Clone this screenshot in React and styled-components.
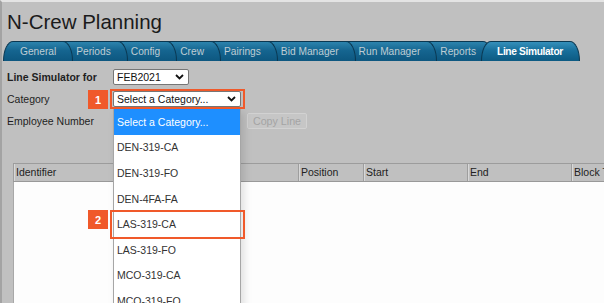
import React from "react";
import styled, { createGlobalStyle } from "styled-components";

const GlobalStyle = createGlobalStyle`
  html, body {
    margin: 0;
    padding: 0;
    height: 100%;
    overflow: hidden;
    background: #c0c0c0;
  }
  body {
    font-family: "Liberation Sans", Arial, sans-serif;
  }
  #root {
    height: 100%;
  }
`;

const TABS = [
  "General",
  "Periods",
  "Config",
  "Crew",
  "Pairings",
  "Bid Manager",
  "Run Manager",
  "Reports",
  "Line Simulator",
];

const CATEGORIES = [
  "Select a Category...",
  "DEN-319-CA",
  "DEN-319-FO",
  "DEN-4FA-FA",
  "LAS-319-CA",
  "LAS-319-FO",
  "MCO-319-CA",
  "MCO-319-FO",
];

const COLUMNS = [
  { label: "Identifier", width: 285 },
  { label: "Position", width: 65 },
  { label: "Start", width: 104 },
  { label: "End", width: 104 },
  { label: "Block Time", width: 120 },
];

const Chevron = () => (
  <svg width="9" height="6" viewBox="0 0 9 6">
    <path d="M1 1l3.5 3.5L8 1" fill="none" stroke="#111" strokeWidth="1.8" />
  </svg>
);

export default function App() {
  return (
    <Page>
      <GlobalStyle />
      <Title>N-Crew Planning</Title>
      <TabBar>
        {TABS.map((t, i) => (
          <Tab
            key={t}
            $first={i === 0}
            $active={t === "Line Simulator"}
            $z={TABS.length - i}
          >
            {t}
          </Tab>
        ))}
      </TabBar>

      <Form>
        <Label $bold>Line Simulator for</Label>
        <SelectBox $width={76}>
          FEB2021
          <Chevron />
        </SelectBox>

        <Label>Category</Label>
        <Marked $inset="-2px -4px -2px -3px">
          <Badge $left={-25} $top={-1}>1</Badge>
          <SelectBox $width={128}>
            Select a Category...
            <Chevron />
          </SelectBox>
          <Dropdown>
            {CATEGORIES.map((c, i) => (
              <Option key={c} $active={i === 0}>
                {c === "LAS-319-CA" ? (
                  <Marked $inset="-1px -5px -2px -4px" $fill>
                    <Badge $left={-26} $top={-1}>2</Badge>
                    <OptionText>{c}</OptionText>
                  </Marked>
                ) : (
                  <OptionText>{c}</OptionText>
                )}
              </Option>
            ))}
          </Dropdown>
        </Marked>

        <Label>Employee Number</Label>
        <Controls>
          <TextInput />
          <CopyButton disabled>Copy Line</CopyButton>
        </Controls>
      </Form>

      <Grid>
        <HeadRow>
          {COLUMNS.map((c) => (
            <HeadCell key={c.label} $width={c.width}>
              {c.label}
            </HeadCell>
          ))}
        </HeadRow>
        <GridBody />
      </Grid>
    </Page>
  );
}

const Page = styled.div`
  height: 100%;
  box-sizing: border-box;
  display: flex;
  flex-direction: column;
  border-top: 2px solid #e4e4e4;
  border-left: 2px solid #a3a3a3;
  overflow: hidden;
`;

const Title = styled.h1`
  margin: 0;
  padding: 8px 0 7px 5px;
  font-size: 20.5px;
  line-height: 24px;
  font-weight: normal;
  color: #1b1b1b;
`;

const TabBar = styled.div`
  display: flex;
  height: 20px;
  padding-left: 1px;
`;

const Tab = styled.div`
  position: relative;
  z-index: ${(p) => (p.$active ? 50 : p.$z)};
  box-sizing: border-box;
  height: 20px;
  margin-left: ${(p) => (p.$first ? "0" : "-12px")};
  padding: 0 16px 0 ${(p) => (p.$first ? "16px" : "15px")};
  display: flex;
  align-items: center;
  white-space: nowrap;
  font-size: 10.2px;
  font-weight: ${(p) => (p.$active ? "bold" : "normal")};
  letter-spacing: ${(p) => (p.$active ? "-0.35px" : "0")};
  color: ${(p) => (p.$active ? "#ffffff" : "#bfcdd4")};
  background: ${(p) =>
    p.$active
      ? "linear-gradient(#3590bb, #186f9b 45%, #0c5a82)"
      : "linear-gradient(#2c83ad, #156590 45%, #0d5780)"};
  border-top: 1px solid #0a3852;
  border-right: 1px solid #0a3852;
  border-left: ${(p) =>
    p.$first || p.$active ? "1px solid #0a3852" : "none"};
  border-top-right-radius: 10px 20px;
  border-top-left-radius: ${(p) =>
    p.$first || p.$active ? "10px 20px" : "0"};
`;

const Form = styled.div`
  display: grid;
  grid-template-columns: 106px auto;
  row-gap: 6px;
  padding: 8px 0 0 5px;
  align-items: center;
  justify-items: start;
`;

const Label = styled.div`
  font-size: 10.5px;
  font-weight: ${(p) => (p.$bold ? "bold" : "normal")};
  color: #1e1e1e;
  white-space: nowrap;
`;

const SelectBox = styled.div`
  box-sizing: border-box;
  width: ${(p) => p.$width}px;
  height: 16px;
  padding: 0 4px 0 3px;
  display: flex;
  align-items: center;
  justify-content: space-between;
  background: #ffffff;
  border: 1px solid #767676;
  border-radius: 2px;
  font-size: 10.5px;
  color: #111;
`;

const Marked = styled.div`
  position: relative;
  ${(p) => (p.$fill ? "height: 100%; display: flex; align-items: center;" : "")}

  &::after {
    content: "";
    position: absolute;
    inset: ${(p) => p.$inset};
    border: 2px solid #f0592a;
    pointer-events: none;
    z-index: 30;
  }
`;

const Badge = styled.div`
  position: absolute;
  left: ${(p) => p.$left}px;
  top: ${(p) => p.$top}px;
  width: 20px;
  height: 19px;
  display: flex;
  align-items: center;
  justify-content: center;
  background: #f0592a;
  color: #ffffff;
  font-size: 11px;
  font-weight: bold;
  z-index: 30;
`;

const Dropdown = styled.div`
  position: absolute;
  top: calc(100% + 2px);
  left: 0;
  z-index: 20;
  width: 128px;
  box-sizing: border-box;
  background: #ffffff;
  border: 1px solid #a6a6a6;
  border-top: none;
  box-shadow: 3px 3px 8px rgba(0, 0, 0, 0.12);
`;

const Option = styled.div`
  height: 25.6px;
  background: ${(p) => (p.$active ? "#1e8fff" : "#ffffff")};
  color: ${(p) => (p.$active ? "#ffffff" : "#333333")};
  font-size: 10.5px;
`;

const OptionText = styled.div`
  height: 100%;
  width: 100%;
  display: flex;
  align-items: center;
  padding-left: 3px;
  white-space: nowrap;
`;

const Controls = styled.div`
  display: flex;
  align-items: center;
  gap: 6px;
`;

const TextInput = styled.div`
  box-sizing: border-box;
  width: 128px;
  height: 16px;
  background: #ffffff;
  border: 1px solid #767676;
`;

const CopyButton = styled.button`
  box-sizing: border-box;
  width: 60px;
  height: 16px;
  padding: 0;
  background: #c6c6c6;
  border: 1px solid #d2d2d2;
  border-radius: 2px;
  font-family: inherit;
  font-size: 10.7px;
  color: #a4a4a4;
`;

const Grid = styled.div`
  flex: 1;
  display: flex;
  flex-direction: column;
  width: 700px;
  margin: 34px 0 0 11px;
`;

const HeadRow = styled.div`
  display: flex;
  height: 19px;
  box-sizing: border-box;
  background: #c0c0c0;
  border-top: 1px solid #9c9c9c;
  border-bottom: 1px solid #999999;
`;

const HeadCell = styled.div`
  flex: none;
  box-sizing: border-box;
  width: ${(p) => p.$width}px;
  padding-left: 2px;
  border-left: 1px solid #9e9e9e;
  box-shadow: inset 1px 0 #d8d8d8;
  font-size: 10.5px;
  line-height: 17px;
  color: #222;
  white-space: nowrap;
`;

const GridBody = styled.div`
  flex: 1;
  background: #fdfdfd;
  border-left: 1px solid #a8a8a8;
`;
